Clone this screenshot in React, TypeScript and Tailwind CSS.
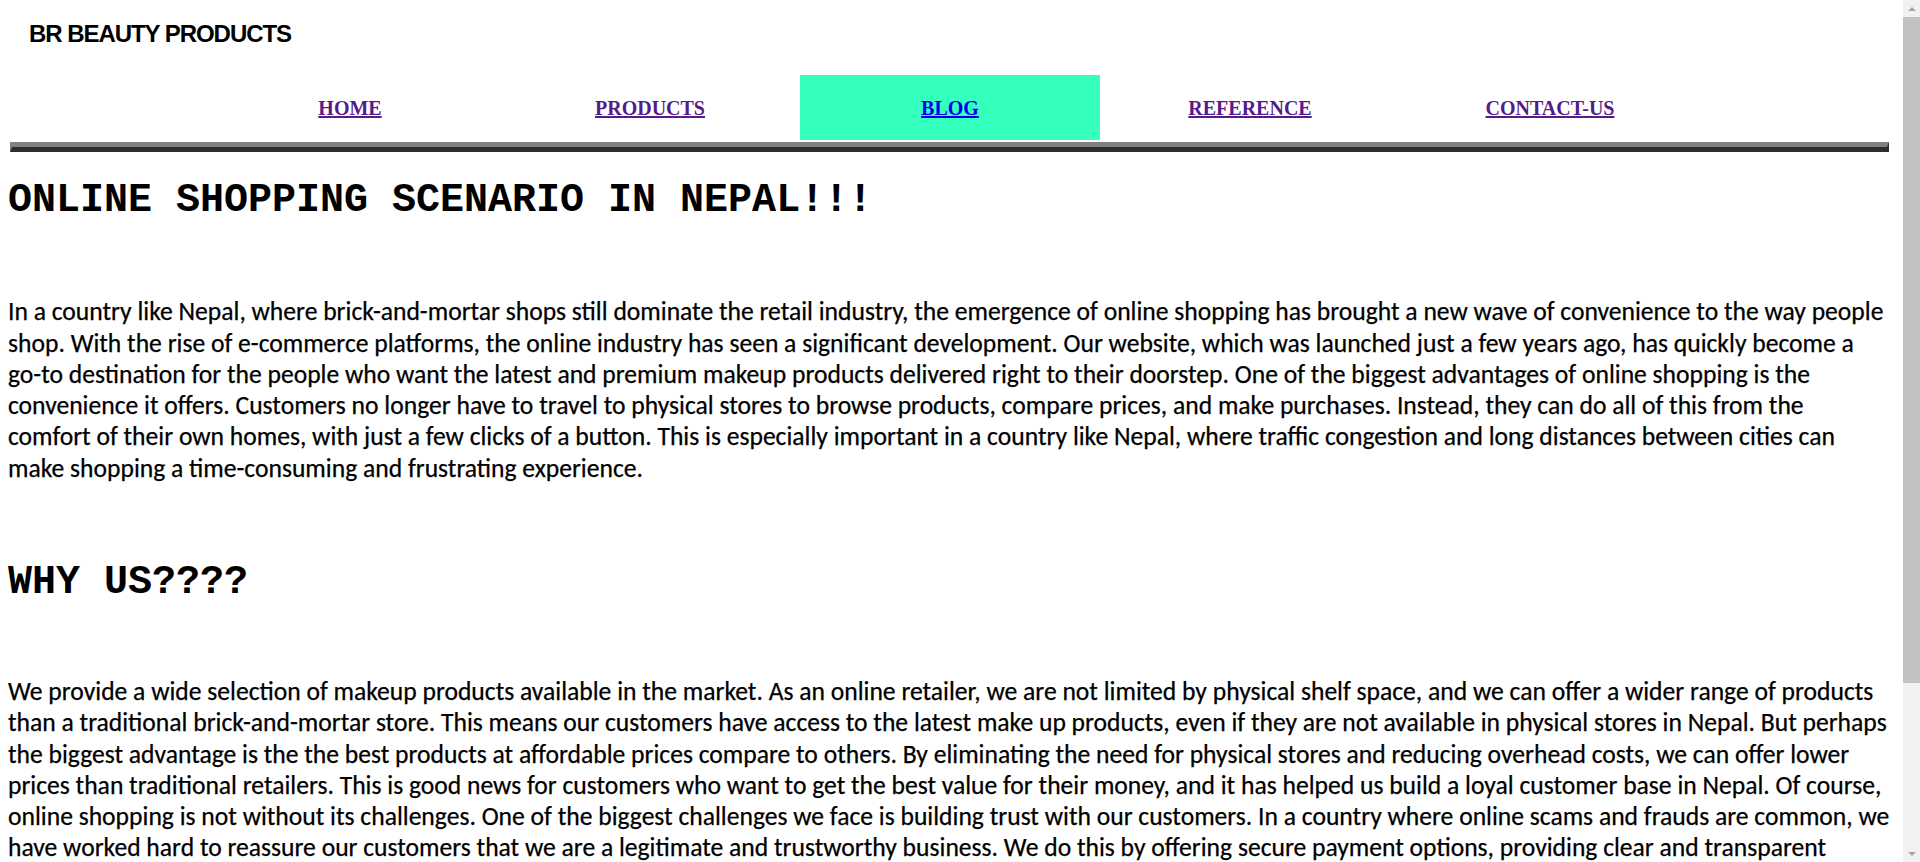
const NAV = [
  { label: "HOME", active: false },
  { label: "PRODUCTS", active: false },
  { label: "BLOG", active: true },
  { label: "REFERENCE", active: false },
  { label: "CONTACT-US", active: false },
];

const INTRO =
  "In a country like Nepal, where brick-and-mortar shops still dominate the retail industry, the emergence of online shopping has brought a new wave of convenience to the way people shop. With the rise of e-commerce platforms, the online industry has seen a significant development. Our website, which was launched just a few years ago, has quickly become a go-to destination for the people who want the latest and premium makeup products delivered right to their doorstep. One of the biggest advantages of online shopping is the convenience it offers. Customers no longer have to travel to physical stores to browse products, compare prices, and make purchases. Instead, they can do all of this from the comfort of their own homes, with just a few clicks of a button. This is especially important in a country like Nepal, where traffic congestion and long distances between cities can make shopping a time-consuming and frustrating experience.";

const WHY =
  "We provide a wide selection of makeup products available in the market. As an online retailer, we are not limited by physical shelf space, and we can offer a wider range of products than a traditional brick-and-mortar store. This means our customers have access to the latest make up products, even if they are not available in physical stores in Nepal. But perhaps the biggest advantage is the the best products at affordable prices compare to others. By eliminating the need for physical stores and reducing overhead costs, we can offer lower prices than traditional retailers. This is good news for customers who want to get the best value for their money, and it has helped us build a loyal customer base in Nepal. Of course, online shopping is not without its challenges. One of the biggest challenges we face is building trust with our customers. In a country where online scams and frauds are common, we have worked hard to reassure our customers that we are a legitimate and trustworthy business. We do this by offering secure payment options, providing clear and transparent information about our products, and offering hassle-free returns.";

// classic scrollbar look, the page is taller than the window
function Scrollbar() {
  return (
    <div className="flex w-[17px] shrink-0 flex-col bg-[#f1f1f1]">
      <div className="flex h-[17px] items-center justify-center">
        <div className="h-0 w-0 border-x-[4px] border-b-[4px] border-x-transparent border-b-[#a3a3a3]" />
      </div>
      <div className="h-[666px] bg-[#c1c1c1]" />
      <div className="flex-1" />
      <div className="flex h-[17px] items-center justify-center">
        <div className="h-0 w-0 border-x-[4px] border-t-[4px] border-x-transparent border-t-[#a3a3a3]" />
      </div>
    </div>
  );
}

export default function App() {
  return (
    <div className="flex h-[862px] overflow-hidden bg-white text-black">
      <main className="min-w-0 flex-1 overflow-hidden p-2">
        <header>
          <div className="mt-[13px] pl-[21px] font-['Liberation_Sans',Arial,sans-serif] text-[24px] font-bold leading-[26px] tracking-[-1.05px]">
            BR BEAUTY PRODUCTS
          </div>
          <nav className="mt-[28px] flex pl-[192px]">
            {NAV.map((n) => (
              <div
                key={n.label}
                className={
                  "flex h-[65px] w-[300px] items-center justify-center " + (n.active ? "bg-[#34ffbc]" : "")
                }
              >
                <a
                  href="#"
                  className={
                    "font-['Liberation_Serif','Times_New_Roman',serif] text-[20px] font-bold underline " +
                    (n.active ? "text-[#0000ee]" : "text-[#551a8b]")
                  }
                >
                  {n.label}
                </a>
              </div>
            ))}
          </nav>
          <div className="mt-[2px] ml-[2px] mr-[6px] border-x-[2px] border-y-[5px] border-t-[#808080] border-l-[#808080] border-b-[#2d2d2d] border-r-[#2d2d2d]" />
        </header>

        <h1 className="mt-[26px] font-['Liberation_Mono','Courier_New',monospace] text-[40px] font-bold leading-[45.3px]">
          ONLINE SHOPPING SCENARIO IN NEPAL!!!
        </h1>
        <p className="mt-[73px] pr-[4px] font-['Carlito','Calibri',sans-serif] text-[25.6px] leading-[31.25px] [-webkit-text-stroke:0.25px_#000]">
          {INTRO}
        </p>

        <h1 className="mt-[76px] font-['Liberation_Mono','Courier_New',monospace] text-[40px] font-bold leading-[45.3px]">
          WHY US????
        </h1>
        <p className="mt-[71px] pr-[4px] font-['Carlito','Calibri',sans-serif] text-[25.6px] leading-[31.25px] [-webkit-text-stroke:0.25px_#000]">
          {WHY}
        </p>
      </main>
      <Scrollbar />
    </div>
  );
}
